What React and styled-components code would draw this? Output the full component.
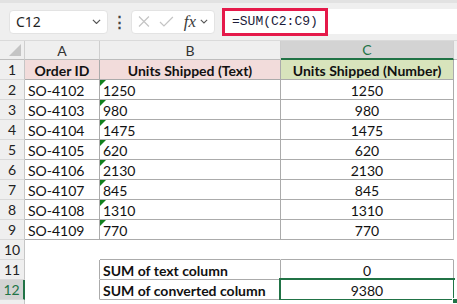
import styled, { createGlobalStyle } from 'styled-components';

const GlobalStyle = createGlobalStyle`
  html, body {
    margin: 0;
    padding: 0;
    background: #ffffff;
  }
  * {
    box-sizing: border-box;
  }
`;

const GREEN = '#217346';
const LINE = '#ababab';

// Formula bar
const Page = styled.div`
  width: 457px;
  height: 304px;
  overflow: hidden;
  background: #ffffff;
  font-family: Lato, 'Open Sans', sans-serif;
`;

const Toolbar = styled.div`
  display: flex;
  align-items: center;
  height: 41px;
  padding-left: 9px;
  background: #efefef;
  border-top: 3px solid #e2e2e2;
  border-bottom: 1px solid #dadada;
`;

const NameBox = styled.div`
  display: flex;
  align-items: center;
  justify-content: space-between;
  width: 99px;
  height: 24px;
  padding: 0 6px;
  background: #ffffff;
  border: 1px solid #e3e3e3;
  border-radius: 4px;
  font-family: 'Noto Sans', sans-serif;
  font-size: 14px;
  color: #1f1f1f;
`;

const Dots = styled.div`
  width: 23px;
  text-align: center;
  font-size: 15px;
  font-weight: bold;
  color: #444;
`;

const FxBox = styled.div`
  display: flex;
  align-items: center;
  gap: 9px;
  width: 84px;
  height: 24px;
  padding: 0 6px;
  background: #ffffff;
  border: 1px solid #e3e3e3;
  border-radius: 4px;
`;

const Fx = styled.span`
  font-family: 'Liberation Serif', serif;
  font-style: italic;
  font-size: 17px;
  color: #3b3b3b;
  margin-left: 1px;
  margin-right: -5px;
`;

const FormulaInput = styled.div`
  display: flex;
  align-items: center;
  flex: 1;
  height: 25px;
  margin-left: 7px;
  background: #ffffff;
`;

const Highlight = styled.div`
  display: flex;
  align-items: center;
  width: 106px;
  height: 28px;
  padding-left: 7px;
  border: 3px solid #e5194a;
  font-family: 'Liberation Mono', monospace;
  font-size: 13px;
  color: #1c1c3a;
`;

// Grid
const Sheet = styled.div`
  display: grid;
  grid-template-columns: 25px 75px 181px 173px 1fr;
  grid-template-rows: 19px repeat(13, 20px);
  font-size: 14px;
  color: #111;
`;

const Corner = styled.div`
  position: relative;
  background: #efefef;
  border-right: 1px solid #cfcfcf;
  border-bottom: 1px solid #bdbdbd;
`;

const ColHeader = styled.div`
  display: flex;
  align-items: center;
  justify-content: center;
  background: ${(p) => (p.$active ? '#d3d3d3' : '#efefef')};
  color: ${(p) => (p.$active ? GREEN : '#333')};
  border-right: 1px solid #cfcfcf;
  border-bottom: ${(p) => (p.$active ? `2px solid ${GREEN}` : '1px solid #bdbdbd')};
  font-size: 14px;
`;

const RowHeader = styled.div`
  display: flex;
  align-items: center;
  justify-content: center;
  background: ${(p) => (p.$active ? '#d3d3d3' : '#efefef')};
  color: ${(p) => (p.$active ? GREEN : '#222')};
  border-right: ${(p) => (p.$active ? `2px solid ${GREEN}` : '1px solid #c6c6c6')};
  border-bottom: 1px solid #d9d9d9;
  font-size: 14px;
`;

const Cell = styled.div`
  position: relative;
  display: flex;
  align-items: center;
  justify-content: ${(p) => (p.$center ? 'center' : 'flex-start')};
  padding: 1px 3px 0;
  background: ${(p) => p.$bg || '#ffffff'};
  font-weight: ${(p) => (p.$bold ? 700 : 400)};
  border-right: 1px solid ${(p) => (p.$r ? LINE : 'transparent')};
  border-bottom: 1px solid ${(p) => (p.$b ? LINE : 'transparent')};
  white-space: nowrap;

  ${(p) =>
    p.$flag &&
    `
    &::before {
      content: '';
      position: absolute;
      left: 0;
      top: 0;
      border-top: 6px solid #12801e;
      border-right: 6px solid transparent;
    }
  `}

  ${(p) =>
    p.$selected &&
    `
    &::after {
      content: '';
      position: absolute;
      left: -2px;
      top: -2px;
      right: -2px;
      bottom: -2px;
      border: 2px solid ${GREEN};
    }
  `}
`;

const Handle = styled.span`
  position: absolute;
  right: -5px;
  bottom: -5px;
  width: 6px;
  height: 6px;
  background: ${GREEN};
  border: 1px solid #fff;
  z-index: 2;
`;

const Chevron = ({ size = 9 }) => (
  <svg width={size} height={size * 0.6} viewBox="0 0 10 6">
    <polyline points="1,1 5,5 9,1" fill="none" stroke="#555" strokeWidth="1.3" />
  </svg>
);

const orders = [
  ['SO-4102', '1250'],
  ['SO-4103', '980'],
  ['SO-4104', '1475'],
  ['SO-4105', '620'],
  ['SO-4106', '2130'],
  ['SO-4107', '845'],
  ['SO-4108', '1310'],
  ['SO-4109', '770'],
];

const App = () => (
  <Page>
    <GlobalStyle />
    <Toolbar>
      <NameBox>
        <span>C12</span>
        <Chevron />
      </NameBox>
      <Dots>⋮</Dots>
      <FxBox>
        <svg width="12" height="11" viewBox="0 0 12 11">
          <path d="M1 0.5 L11 10.5 M11 0.5 L1 10.5" stroke="#c4c4c4" strokeWidth="1.2" fill="none" />
        </svg>
        <svg width="15" height="11" viewBox="0 0 15 11">
          <polyline points="1,6 5,10 14,1" stroke="#c4c4c4" strokeWidth="1.2" fill="none" />
        </svg>
        <Fx>fx</Fx>
        <Chevron size={8} />
      </FxBox>
      <FormulaInput>
        <Highlight>=SUM(C2:C9)</Highlight>
      </FormulaInput>
    </Toolbar>

    <Sheet>
      <Corner>
        <svg width="12" height="12" viewBox="0 0 12 12" style={{ position: 'absolute', right: 3, bottom: 3 }}>
          <polygon points="12,0 12,12 0,12" fill="#c4c4c4" />
        </svg>
      </Corner>
      <ColHeader>A</ColHeader>
      <ColHeader>B</ColHeader>
      <ColHeader $active>C</ColHeader>
      <ColHeader />

      <RowHeader>1</RowHeader>
      <Cell $r $b $center $bold $bg="#f2dcdb">Order ID</Cell>
      <Cell $r $b $center $bold $bg="#f2dcdb">Units Shipped (Text)</Cell>
      <Cell $r $b $center $bold $bg="#d8e4bc">Units Shipped (Number)</Cell>
      <Cell />

      {orders.map(([id, units], i) => [
        <RowHeader key={`h${i}`}>{i + 2}</RowHeader>,
        <Cell key={`a${i}`} $r $b>{id}</Cell>,
        <Cell key={`b${i}`} $r $b $flag>{units}</Cell>,
        <Cell key={`c${i}`} $r $b $center>{units}</Cell>,
        <Cell key={`d${i}`} />,
      ])}

      <RowHeader>10</RowHeader>
      <Cell />
      <Cell $b />
      <Cell $b />
      <Cell />

      <RowHeader>11</RowHeader>
      <Cell $r />
      <Cell $r $b $bold>SUM of text column</Cell>
      <Cell $r $b $center>0</Cell>
      <Cell />

      <RowHeader $active>12</RowHeader>
      <Cell $r />
      <Cell $r $b $bold>SUM of converted column</Cell>
      <Cell $r $b $center $selected>
        9380
        <Handle />
      </Cell>
      <Cell />

      <RowHeader />
      <Cell />
      <Cell />
      <Cell />
      <Cell />
    </Sheet>
  </Page>
);

export default App;
